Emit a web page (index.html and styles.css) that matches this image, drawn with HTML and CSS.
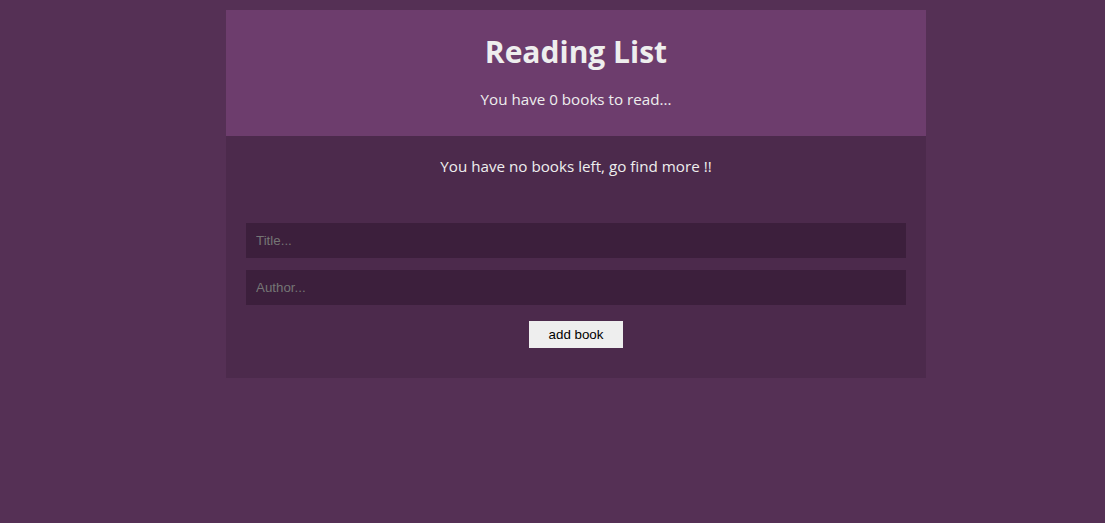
FILE: index.html
```html
<!DOCTYPE html>
<html>
<head>
<meta charset="utf-8">
<title>Reading List</title>
<link rel="stylesheet" href="styles.css">
</head>
<body>
<div class="app">
  <div class="navbar">
    <h1>Reading List</h1>
    <p>You have 0 books to read...</p>
  </div>
  <div class="empty">You have no books left, go find more !!</div>
  <form class="book-form">
    <input type="text" class="field" placeholder="Title...">
    <input type="text" class="field" placeholder="Author...">
    <input type="submit" class="submit" value="add book">
  </form>
</div>
</body>
</html>
```
FILE: styles.css
```css
body {
  margin: 0;
  background: #553055;
  font-family: "Open Sans", "Noto Sans", sans-serif;
}
.app {
  background: #4c2a4c;
  margin: 10px 0 10px 226px;
  width: 700px;
  color: #eee;
}
.navbar {
  padding: 10px 20px;
  text-align: center;
  background: #6d3d6d;
}
.navbar h1 {
  margin: 10px 0;
  font-size: 30px;
  line-height: 43px;
  font-weight: 700;
}
.navbar p {
  margin: 16px 0;
  font-size: 15.2px;
  line-height: 21px;
}
.empty {
  margin: 20px;
  text-align: center;
  font-size: 15.2px;
  line-height: 21px;
}
.book-form {
  padding: 20px;
  margin: 0;
  display: flex;
  flex-direction: column;
}
.field {
  display: block;
  width: 100%;
  padding: 10px;
  box-sizing: border-box;
  margin: 6px 0;
  background: #3c1f3c;
  color: #eee;
  border: 0;
  font-family: "Liberation Sans", Arial, sans-serif;
  font-size: 13.33px;
  line-height: 15px;
  height: 35px;
  outline: none;
}
.field::placeholder {
  color: #757575;
}
.submit {
  margin: 10px auto;
  align-self: center;
  background: #eee;
  color: #000;
  border: 0;
  padding: 6px 20px;
  display: block;
  font-family: "Liberation Sans", Arial, sans-serif;
  font-size: 13.33px;
  height: 27px;
}
```
